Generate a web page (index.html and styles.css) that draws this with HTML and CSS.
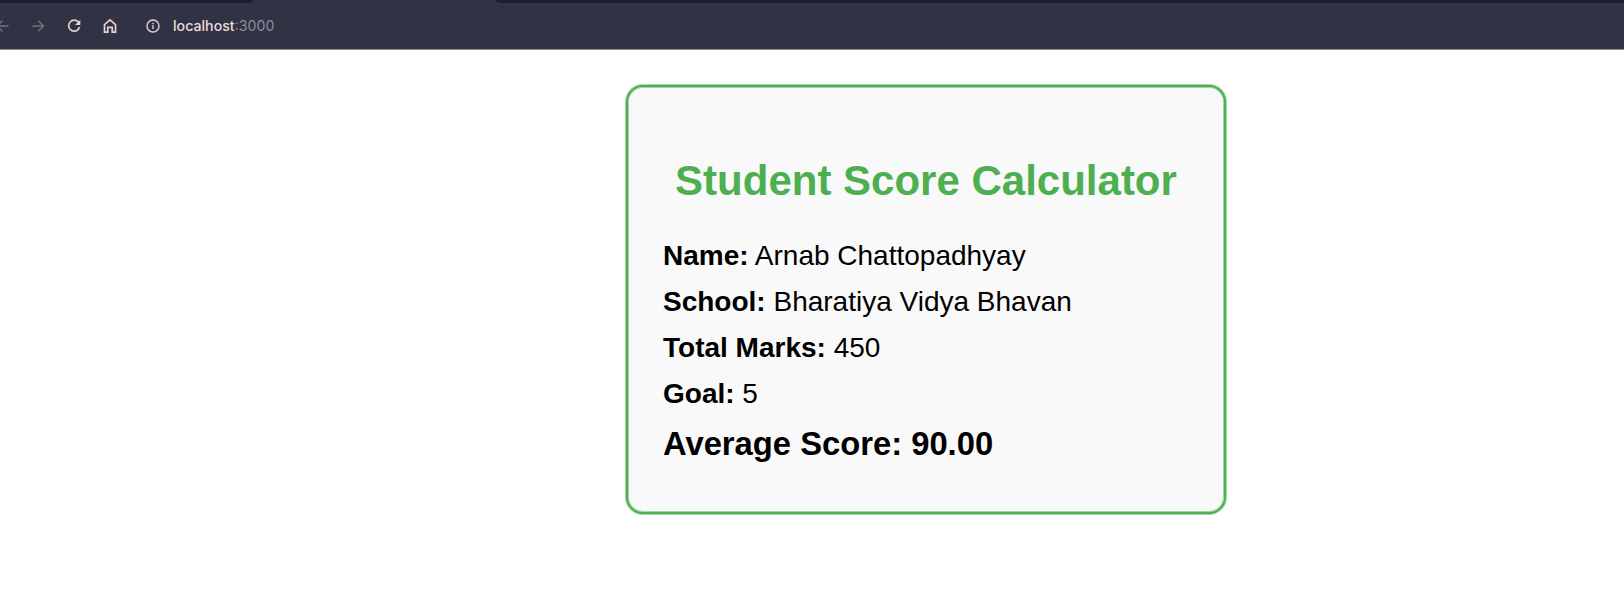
FILE: index.html
```html
<!DOCTYPE html>
<html lang="en">
<head>
<meta charset="utf-8">
<title>Student Score Calculator</title>
<link rel="stylesheet" href="styles.css">
</head>
<body>
<header class="browser">
  <div class="tabs"><div class="tabs-left"></div><div class="tabs-right"></div></div>
  <nav class="toolbar">
    <svg class="icon dim" viewBox="0 0 16 16"><path d="M14.500 8H3M8.500 2.500L3 8l5.500 5.500"/></svg>
    <svg class="icon dim" viewBox="0 0 16 16"><path d="M2.300 8H13.500M8.300 2.800L13.500 8l-5.200 5.200"/></svg>
    <svg class="icon" viewBox="0 0 16 16"><path class="bold" d="M12.700 4.500A5.500 5.500 0 1 0 13.500 9"/><path class="solid" d="M14.300 1.800V7H9z"/></svg>
    <svg class="icon" viewBox="0 0 16 16"><path class="bold" d="M2.500 14.200V6.600L8 1.800l5.500 4.800v7.600H10.200V9.300H5.800v4.900z"/></svg>
    <svg class="icon info" viewBox="0 0 16 16"><circle cx="8" cy="8" r="6"/><path d="M8 7.300V11M8 4.700v1.500"/></svg>
    <span class="url">localhost<span class="port">:3000</span></span>
  </nav>
</header>
<main class="page">
  <section class="card">
    <h1 class="title">Student Score Calculator</h1>
    <p class="row"><b>Name:</b> Arnab Chattopadhyay</p>
    <p class="row"><b>School:</b> Bharatiya Vidya Bhavan</p>
    <p class="row"><b>Total Marks:</b> 450</p>
    <p class="row"><b>Goal:</b> 5</p>
    <p class="average">Average Score: 90.00</p>
  </section>
</main>
</body>
</html>
```
FILE: styles.css
```css
* { box-sizing: border-box; }
body {
  margin: 0;
  height: 607px;
  overflow: hidden;
  background: #fff;
  color: #000;
  font-family: "Liberation Sans", Arial, sans-serif;
}
.browser {
  height: 50px;
  background: #313244;
  border-bottom: 1px solid #8d8792;
}
.tabs { display: flex; justify-content: space-between; height: 3px; }
.tabs-left, .tabs-right { height: 2.5px; background: #1e1e2e; }
.tabs-left { width: 254px; border-bottom-right-radius: 8px 3px; }
.tabs-right { width: 1129px; border-bottom-left-radius: 8px 3px; }
.toolbar { display: flex; align-items: center; height: 45px; }
.icon {
  flex: none;
  width: 16px;
  height: 16px;
  margin-right: 20px;
  fill: none;
  stroke: #e5d2d3;
  stroke-width: 1.4;
}
.icon:first-child { margin-left: -6px; }
.icon .bold { stroke-width: 1.7; }
.icon .solid { fill: #e5d2d3; stroke: none; }
.icon.dim { stroke: #77717f; }
.icon.info { margin: 0 12px 0 7px; }
.url { color: #ecdcdc; font: 500 14.2px/20px Inter, sans-serif; }
.port { color: #8f8c9c; font-weight: 400; }
.page { padding: 35px 0 0 626px; }
.card {
  width: 600px;
  height: 429px;
  padding: 66px 35px 0;
  border: 2px solid #4caf50;
  border-radius: 17px;
  background: #f9f9f9;
  box-shadow: 0 0 0 1px #4caf5080, inset 0 0 0 1px #4caf5080;
}
.title {
  margin: 0 0 24px;
  color: #4caf50;
  font-size: 42px;
  line-height: 56px;
  text-align: center;
  white-space: nowrap;
}
.row { margin: 0; font-size: 28px; line-height: 46px; }
.average { margin: 2px 0 0; font-size: 32.75px; font-weight: bold; line-height: 49px; }
```
